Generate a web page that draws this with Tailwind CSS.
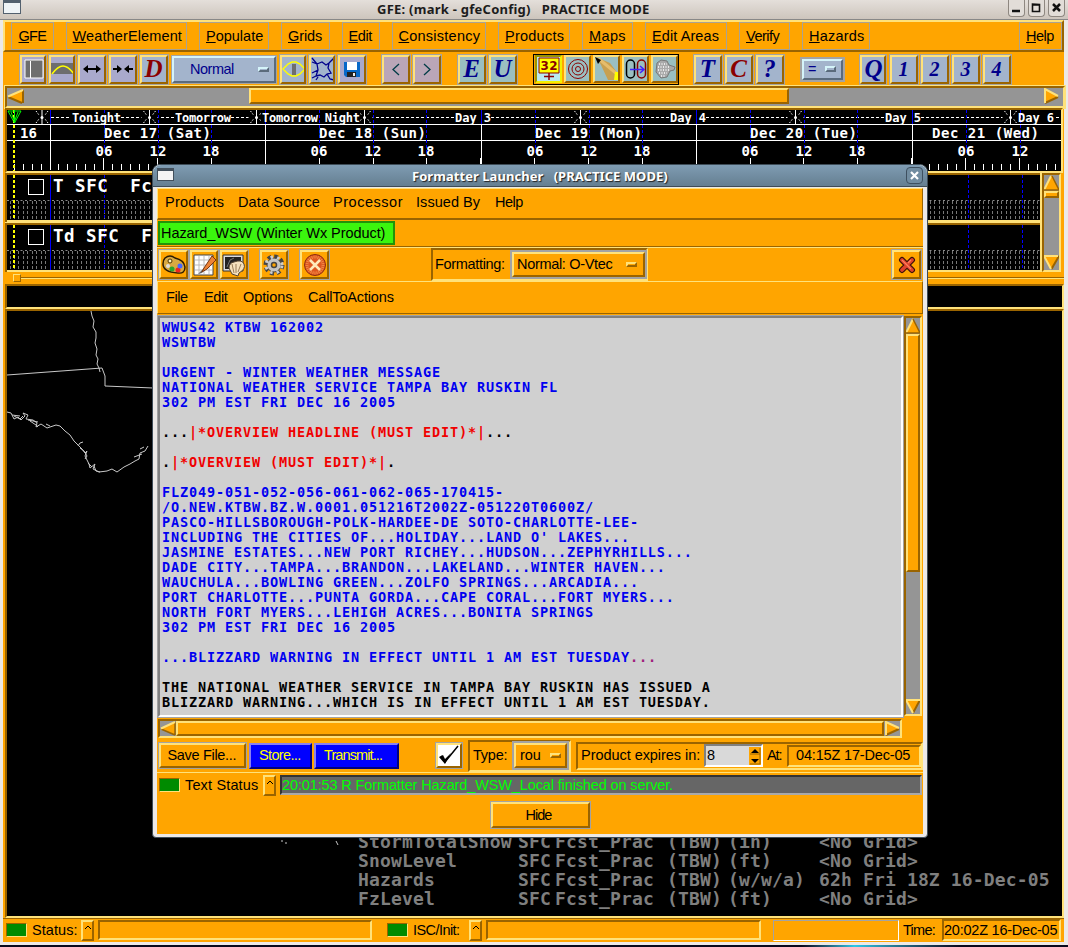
<!DOCTYPE html>
<html lang="en"><head><meta charset="utf-8"><title>GFE</title>
<script src="https://cdn.jsdelivr.net/npm/@tailwindcss/browser@4"></script></head>
<body class="w-[1068px] h-[947px] overflow-hidden bg-[#08081c] font-['Liberation_Sans'] text-[14.5px] leading-none text-black whitespace-nowrap">
<main class="relative flex h-[947px] w-[1068px] flex-col overflow-hidden">
<header class="relative flex h-5 shrink-0 items-center border-b border-[#888] bg-linear-to-b from-[#e4dfda] to-[#cdc5bd]">
  <i class="ml-[3px] h-[14px] w-[18px] -mt-1.5 border border-t-[3px] border-[#52606e] bg-[#eef3f6]"></i>
  <h1 class="ml-[356px] w-[290px] font-['Noto_Sans'] text-[13px] tracking-[0.25px] font-bold text-[#1c1c1c] whitespace-pre">GFE: (mark - gfeConfig)   PRACTICE MODE</h1>
  <div class="ml-auto mr-[3px] -mt-[3px] flex gap-[3px] *:flex *:h-[17px] *:w-[17px] *:items-center *:justify-center *:rounded-b *:border *:border-t-0 *:border-[#8e8780] *:bg-[#e2ddd8]">
    <b><svg width="11" height="11"><path d="M1 9h8" stroke="#111" stroke-width="2.5"/></svg></b>
    <b><svg width="11" height="11"><path d="M1.5 2v7.5h7V2.500z M1 3h8" fill="none" stroke="#111" stroke-width="1.6"/></svg></b>
    <b><svg width="11" height="11"><path d="M2 2l7 7M9 2l-7 7" stroke="#111" stroke-width="2.5"/></svg></b>
  </div>
</header>
<div class="flex h-[922px] shrink-0 flex-col border-l-[3px] border-r-4 border-[#ece9e6] bg-[#ffa500]">
 <nav class="flex h-8 w-[1061px] shrink-0 gap-3 border-2 border-t-[#ffe27a] border-l-[#ffe27a] border-r-[#9a6400] border-b-[#9a6400] pl-[6px] *:flex *:h-7 *:items-center *:justify-center *:border *:border-[#a9a294]">
  <a class="w-[43px]"><span data-w="28"><u>G</u>FE</span></a><a class="w-[121px]"><span data-w="108"><u>W</u>eatherElement</span></a><a class="w-[70px]"><span data-w="56"><u>P</u>opulate</span></a><a class="w-[49px]"><span data-w="35"><u>G</u>rids</span></a><a class="w-[38px]"><span data-w="25"><u>E</u>dit</span></a><a class="w-[94px]"><span data-w="81"><u>C</u>onsistency</span></a><a class="w-[72px]"><span data-w="58"><u>P</u>roducts</span></a><a class="w-[51px]"><span data-w="37"><u>M</u>aps</span></a><a class="w-[82px]"><span data-w="68"><u>E</u>dit Areas</span></a><a class="w-[51px]"><span data-w="37"><u>V</u>erify</span></a><a class="w-[68px]"><span data-w="54"><u>H</u>azards</span></a><a class="ml-auto w-[43px]"><span data-w="29"><u>H</u>elp</span></a>
 </nav>
 <section id="tools" class="flex h-[34px] shrink-0 items-center pl-[17px]"></section>
 <div class="flex h-[22px] w-[1060px] shrink-0 border-2 border-t-[#9a6400] border-l-[#9a6400] border-r-[#ffe27a] border-b-[#ffe27a] bg-[#959595] ml-[2px] outline outline-[#ffe27a]">
  <svg width="17" height="17"><path d="M1 8.500L16 2v13z" fill="#ffa500"/><path d="M16 15V2" stroke="#9a6400" stroke-width="2"/><path d="M1 9L15 15" stroke="#9a6400" stroke-width="2"/><path d="M1 8.500L16 2" stroke="#ffe27a" stroke-width="2"/></svg>
  <i class="ml-[225px] h-[16px] w-[540px] border-2 border-t-[#ffe27a] border-l-[#ffe27a] border-r-[#9a6400] border-b-[#9a6400] bg-[#ffa500]"></i>
  <svg class="ml-auto mr-[3px]" width="17" height="17"><path d="M2 1L15 8.500L2 15z" fill="#ffa500"/><path d="M2 15L15 9" stroke="#9a6400" stroke-width="2"/><path d="M2 15V1L15 8" fill="none" stroke="#ffe27a" stroke-width="2"/></svg>
 </div>
 <div class="flex h-[65px] w-[1058px] shrink-0 ml-[2px] border-2 border-t-[#9a6400] border-l-[#9a6400] border-r-[#ffe27a] border-b-[#ffe27a] bg-black">
  <svg id="tl" width="1054" height="61" viewBox="7 110 1054 61" class="block" font-family="DejaVu Sans Mono" font-weight="bold" fill="#fff"></svg>
 </div>
 <div class="flex h-[99px] shrink-0 pl-[2px]">
  <svg id="rows" width="1037" height="99" viewBox="5 173 1037 99" class="block" font-family="DejaVu Sans Mono" font-weight="bold" fill="#fff"></svg>
  <div class="flex w-[19px] flex-col border-2 border-t-[#9a6400] border-l-[#9a6400] border-r-[#ffe27a] border-b-[#ffe27a] bg-[#959595]">
   <svg width="15" height="16"><path d="M7.500 0L15 15H0z" fill="#ffa500"/><path d="M0 15L7 1" stroke="#ffe27a" stroke-width="2"/><path d="M0 15H15L8 1" fill="none" stroke="#9a6400" stroke-width="1.5"/></svg>
   <i class="h-[7px] border-2 border-t-[#ffe27a] border-l-[#ffe27a] border-r-[#9a6400] border-b-[#9a6400] bg-[#ffa500]"></i>
   <svg class="mt-auto" width="15" height="15"><path d="M0 1H15L7.500 14z" fill="#ffa500"/><path d="M7.500 14L15 1" stroke="#9a6400" stroke-width="2"/><path d="M14 1H0L7 14" fill="none" stroke="#ffe27a" stroke-width="2"/></svg>
  </div>
 </div>
 <div class="flex h-[12px] shrink-0 items-center pl-[10px]"><i class="h-2 w-2 border border-t-[#ffe27a] border-l-[#ffe27a] border-r-[#9a6400] border-b-[#9a6400]"></i><i class="h-[2px] grow border-t border-b border-t-[#9a6400] border-b-[#ffe27a]"></i></div>
 <div class="ml-[2px] h-[25px] w-[1059px] shrink-0 border-2 border-t-[#9a6400] border-l-[#9a6400] border-r-[#ffe27a] border-b-[#ffe27a] bg-black"></div>
 <div class="relative ml-[2px] flex h-[609px] w-[1059px] shrink-0 flex-col justify-end border-2 border-t-[#9a6400] border-l-[#9a6400] border-r-[#ffe27a] border-b-[#ffe27a] bg-black pb-[8px] pl-[351px]">
  <svg class="absolute left-0 top-0" width="340" height="540" viewBox="7 311 340 540" fill="none" stroke="#c8c8c8"><path d="M91 311l1 5 2 5-1 6 3 5v6l-1 5 2 6-1 6 2 4-1 5 2 4 1 4M7 375L102 368l3 8v10l48 2"/><path d="M7 412l4 1 3 6 4-2 3 3 4-4-2-3 5 2-2 4 7 1 4 3-1 4 5-3 6 4 9-3 4 1 5 5 5 4 4 6 8 8 3 4 2-2-2 5 4 8 1 4 5-4-2 5 6 3 8-1 5-2 5 3 7-5 6-3 5-3 4-2 1-6 5-2 3-5M12 415l8 1M28 420l10 2M78 446l2-3 3-1M88 463l4 4M281 841h2M285 843h2M336 841l2 4"/><path d="M14 416l6 3 3-3M30 421l6 4 2 2M46 424l4 2M80 448l4 3 3 5-2 3M94 466l2 5 4 1M134 457l8-3M140 449l4-2"/></svg>
  <div class="grid grid-cols-[160px_37px_112px_61px_91px_auto] font-['DejaVu_Sans_Mono'] text-[18px] font-bold leading-[19px] tracking-[0.15px] text-[#7f7f7f]">
   <b>StormTotalSnow</b><b>SFC</b><b>Fcst_Prac</b><b>(TBW)</b><b>(in)</b><b>&lt;No Grid&gt;</b>
   <b>SnowLevel</b><b>SFC</b><b>Fcst_Prac</b><b>(TBW)</b><b>(ft)</b><b>&lt;No Grid&gt;</b>
   <b>Hazards</b><b>SFC</b><b>Fcst_Prac</b><b>(TBW)</b><b>(w/w/a)</b><b>62h Fri 18Z 16-Dec-05</b>
   <b>FzLevel</b><b>SFC</b><b>Fcst_Prac</b><b>(TBW)</b><b>(ft)</b><b>&lt;No Grid&gt;</b>
  </div>
 </div>
 <footer class="flex h-[23px] shrink-0 items-center border-t border-[#9a6400] pl-[3px]">
  <i class="h-[14px] w-[21px] shrink-0 border border-[#9a6400] border-r-[#ffe27a] border-b-[#ffe27a] bg-[#008b00]"></i>
  <span class="ml-[5px] inline-block shrink-0" data-w="44">Status:</span>
  <i class="ml-[5px] flex h-[21px] w-[13px] shrink-0 justify-center border-2 border-t-[#ffe27a] border-l-[#ffe27a] border-r-[#9a6400] border-b-[#9a6400] pt-[3px]"><svg width="8" height="5"><path d="M1 4l3-3 3 3" fill="none" stroke="#000"/></svg></i>
  <i class="ml-[4px] h-[20px] w-[274px] shrink-0 border-2 border-t-[#9a6400] border-l-[#9a6400] border-r-[#ffe27a] border-b-[#ffe27a]"></i>
  <i class="ml-[15px] h-[14px] w-[21px] shrink-0 border border-[#9a6400] border-r-[#ffe27a] border-b-[#ffe27a] bg-[#008b00]"></i>
  <span class="ml-[5px] inline-block shrink-0" data-w="51">ISC/Init:</span>
  <i class="ml-[5px] flex h-[21px] w-[13px] shrink-0 justify-center border-2 border-t-[#ffe27a] border-l-[#ffe27a] border-r-[#9a6400] border-b-[#9a6400] pt-[3px]"><svg width="8" height="5"><path d="M1 4l3-3 3 3" fill="none" stroke="#000"/></svg></i>
  <i class="ml-[4px] h-[20px] w-[275px] shrink-0 border-2 border-t-[#9a6400] border-l-[#9a6400] border-r-[#ffe27a] border-b-[#ffe27a]"></i>
  <i class="ml-[12px] h-[21px] w-[126px] shrink-0 border border-[#a3a3a3] border-r-white border-b-white"></i>
  <span class="ml-[4px] inline-block shrink-0" data-w="34">Time:</span>
  <span class="ml-[5px] flex h-[22px] w-[119px] shrink-0 items-center border-2 border-t-[#9a6400] border-l-[#9a6400] border-r-[#ffe27a] border-b-[#ffe27a]"><span class="inline-block" data-w="115">20:02Z 16-Dec-05</span></span>
 </footer>
</div>
<div class="h-[3px] shrink-0 bg-[#ece9e6]"></div><div class="h-[2px] shrink-0 bg-linear-to-r from-[#08081c] from-75% via-[#2cc8e8] via-80% to-[#08081c] to-90%"></div>

<section class="absolute left-[152px] top-[164px] flex h-[674px] w-[776px] flex-col rounded-t-lg rounded-b border border-[#3e4c57] bg-[#ece9e6]">
 <div class="flex h-[22px] shrink-0 items-center rounded-t-lg border-b border-[#3e4c57] bg-linear-to-b from-[#7f9cb3] to-[#657f91]">
  <i class="ml-[4px] h-[13px] w-[17px] -mt-0.5 border border-t-[3px] border-[#43505c] bg-[#f4f4f4]"></i>
  <h2 class="ml-[238px] w-[280px] pt-0.5 font-['Noto_Sans'] text-[13px] tracking-[0.05px] font-bold text-white whitespace-pre text-shadow-[1px_1px_1px_#222]">Formatter Launcher   (PRACTICE MODE)</h2>
  <b class="ml-auto mr-[4px] flex h-[17px] w-[17px] items-center justify-center rounded border border-[#3e5060] bg-[#718ca0]"><svg width="9" height="9"><path d="M1 1l7 7M8 1l-7 7" stroke="#fff" stroke-width="2.2"/></svg></b>
 </div>
 <div class="mt-px mx-[4px] flex h-[646px] w-[766px] shrink-0 flex-col bg-[#ffa500]">
  <nav class="flex h-8 shrink-0 items-center border border-t-[#ffe27a] border-l-[#ffe27a] border-r-[#9a6400] border-b-2 border-b-[#9a6400] pl-[7px] pb-[2px]"><span class="w-[73px]"><span class="inline-block" data-w="58">Products</span></span><span class="w-[95px]"><span class="inline-block" data-w="80">Data Source</span></span><span class="w-[83px]"><span class="inline-block" data-w="67">Processor</span></span><span class="w-[79px]"><span class="inline-block" data-w="64">Issued By</span></span><span data-w="29">Help</span></nav>
  <div class="flex h-[27px] shrink-0 items-start border-b border-[#9a6400]"><span class="ml-px mt-[1px] flex h-[24px] w-[237px] items-center border-2 border-[#249109] bg-[#3bf50e] pl-px"><span class="inline-block" data-w="230">Hazard_WSW (Winter Wx Product)</span></span></div>
  <div class="flex h-[34px] shrink-0 items-center border-t border-[#ffe27a]">
   <div class="flex *:flex *:h-[29px] *:items-center *:justify-center *:border-2 *:border-t-[#ffe27a] *:border-l-[#ffe27a] *:border-r-[#9a6400] *:border-b-[#9a6400] *:outline *:outline-[#a3a3a3]">
    <i class="ml-[2px] w-[29px]"><svg width="24" height="20"><path d="M3 3q5-4 10 0q9 2 10 9q0 7-7 6Q1 17 1 9q0-4 2-6z" fill="#d9a941" stroke="#2b1b00" stroke-width="1.500"/><circle cx="8" cy="6" r="2" fill="#fff4bd" stroke="#4c3000"/><circle cx="6" cy="11" r="2" fill="#dedede"/><circle cx="10" cy="14" r="2.500" fill="#2ca42c"/><circle cx="16" cy="15" r="2.500" fill="#e22"/><circle cx="18" cy="11" r="2.500" fill="#46f"/></svg></i>
    <i class="ml-[2px] w-[28px]"><svg width="24" height="24"><path d="M2 2h19v20H2z" fill="#fff" stroke="#444"/><path d="M3 7h17M3 12h17M3 17h17M7 3v18M12 3v18M17 3v18" stroke="#bbb"/><path d="M10 20l-4 1 7-7" fill="#666"/><path d="M12 15L20 3l4 4-9 9-5 3z" fill="#ed8337" stroke="#773510"/></svg></i>
    <i class="ml-[2px] w-[28px]"><svg width="24" height="24"><path d="M2 3h18v14H2z" fill="#222" stroke="#ddd" stroke-width="2"/><path d="M1 2h20v16H1z" fill="none" stroke="#333"/><path d="M5 14l3-7 4-2" stroke="#777" fill="none"/><path d="M10 21l-3-6q0-5 5-6q8-3 10 2q2 5-5 9l-1 3z" fill="#f5e1bd" stroke="#554532"/><path d="M12 20L10 11M14 20v-9M16 19l3-8" stroke="#987d58"/></svg></i>
    <i class="ml-[12px] w-[28px]"><svg width="22" height="22" viewBox="-11 -11 22 22"><circle r="8.500" fill="none" stroke="#444" stroke-width="4" stroke-dasharray="3.800 2.870"/><circle r="7" fill="#c4c4c4" stroke="#444"/><circle r="8" fill="none" stroke="#ccc" stroke-width="3" stroke-dasharray="2.500 4.170" stroke-dashoffset="-.6"/><circle r="2.500" fill="#ffa500" stroke="#444" stroke-width="1.500"/></svg></i>
    <i class="ml-[12px] w-[29px]"><svg width="24" height="24"><circle cx="12" cy="12" r="10.500" fill="#dd5520" stroke="#8b2c12"/><circle cx="12" cy="12" r="8" fill="none" stroke="#f18b45" stroke-dasharray="1 1" stroke-width="3"/><path d="M7 7l10 10M17 7L7 17" stroke="#ffe9bb" stroke-width="2.500"/></svg></i>
   </div>
   <div class="ml-[102px] flex h-[33px] w-[217px] items-center border-2 border-t-[#9a6400] border-l-[#9a6400] border-r-[#ffe27a] border-b-[#ffe27a] pl-[2px]"><span class="inline-block" data-w="72">Formatting:</span><span class="ml-[5px] flex h-[25px] w-[133px] items-center justify-between border-2 border-t-[#ffe27a] border-l-[#ffe27a] border-r-[#9a6400] border-b-[#9a6400] pl-[3px] pr-[6px] outline-2 outline-[#a3a3a3]"><span class="inline-block" data-w="100">Normal: O-Vtec</span><i class="h-[5px] w-[11px] border-2 border-t-[#ffe27a] border-l-[#ffe27a] border-r-[#9a6400] border-b-[#9a6400]"></i></span></div>
   <i class="ml-auto mr-[2px] flex h-[29px] w-[29px] items-center justify-center border-2 border-t-[#ffe27a] border-l-[#ffe27a] border-r-[#9a6400] border-b-[#9a6400] outline outline-[#a3a3a3]"><svg width="18" height="18"><path d="M4 4l10 10M14 4L4 14" stroke="#370f0a" stroke-width="6" stroke-linecap="round"/><path d="M4 4l10 10M14 4L4 14" stroke="#dd422c" stroke-width="3.800" stroke-linecap="round"/><path d="M4 4l9 9M13 4l-3 3" stroke="#ff805c" stroke-width="1.300"/></svg></i>
  </div>
  <nav class="flex h-[33px] shrink-0 items-center border border-t-[#ffe27a] border-l-[#ffe27a] border-r-[#9a6400] border-b-[#9a6400] pl-[8px] pb-px"><span class="w-[38px]"><span class="inline-block" data-w="23">File</span></span><span class="w-[39px]"><span class="inline-block" data-w="25">Edit</span></span><span class="w-[65px]"><span class="inline-block" data-w="50">Options</span></span><span data-w="91">CallToActions</span></nav>
  <div class="mt-[2px] flex h-[402px] shrink-0">
   <pre class="ml-px h-[401px] w-[745px] border-2 border-t-[#808080] border-l-[#808080] border-r-white border-b-white bg-[#d0d0d0] pl-[2px] pt-[2px] font-['DejaVu_Sans_Mono'] text-[13.500px] leading-[15px] font-bold tracking-[0.87px] text-[#0000f0] outline outline-[#a3a3a3]">WWUS42 KTBW 162002
WSWTBW

URGENT - WINTER WEATHER MESSAGE
NATIONAL WEATHER SERVICE TAMPA BAY RUSKIN FL
302 PM EST FRI DEC 16 2005

<span class="text-black">...</span><span class="text-[#f00000]">|*OVERVIEW HEADLINE (MUST EDIT)*|</span><span class="text-black">...</span>

<span class="text-black">.</span><span class="text-[#f00000]">|*OVERVIEW (MUST EDIT)*|</span><span class="text-black">.</span>

FLZ049-051-052-056-061-062-065-170415-
/O.NEW.KTBW.BZ.W.0001.051216T2002Z-051220T0600Z/
PASCO-HILLSBOROUGH-POLK-HARDEE-DE SOTO-CHARLOTTE-LEE-
INCLUDING THE CITIES OF...HOLIDAY...LAND O' LAKES...
JASMINE ESTATES...NEW PORT RICHEY...HUDSON...ZEPHYRHILLS...
DADE CITY...TAMPA...BRANDON...LAKELAND...WINTER HAVEN...
WAUCHULA...BOWLING GREEN...ZOLFO SPRINGS...ARCADIA...
PORT CHARLOTTE...PUNTA GORDA...CAPE CORAL...FORT MYERS...
NORTH FORT MYERS...LEHIGH ACRES...BONITA SPRINGS
302 PM EST FRI DEC 16 2005

...BLIZZARD WARNING IN EFFECT UNTIL 1 AM EST TUESDAY<span class="text-[#a0207c]">...</span>

<span class="text-black">THE NATIONAL WEATHER SERVICE IN TAMPA BAY RUSKIN HAS ISSUED A
BLIZZARD WARNING...WHICH IS IN EFFECT UNTIL 1 AM EST TUESDAY.</span></pre>
   <div class="ml-px flex h-[400px] w-[18px] flex-col border-2 border-t-[#9a6400] border-l-[#9a6400] border-r-[#ffe27a] border-b-[#ffe27a] bg-[#959595]">
    <svg width="14" height="16"><path d="M7 0L14 15H0z" fill="#ffa500"/><path d="M0 15L7 1" stroke="#ffe27a" stroke-width="2"/><path d="M0 15H14L7 1" fill="none" stroke="#9a6400" stroke-width="1.500"/></svg>
    <i class="h-[238px] border-2 border-t-[#ffe27a] border-l-[#ffe27a] border-r-[#9a6400] border-b-[#9a6400] bg-[#ffa500]"></i>
    <svg class="mt-auto" width="14" height="15"><path d="M0 1H14L7 14z" fill="#ffa500"/><path d="M7 14L14 1" stroke="#9a6400" stroke-width="2"/><path d="M14 1H0L7 14" fill="none" stroke="#ffe27a" stroke-width="2"/></svg>
   </div>
  </div>
  <div class="ml-px mt-[1px] flex h-[19px] w-[744px] shrink-0 border-2 border-t-[#9a6400] border-l-[#9a6400] border-r-[#ffe27a] border-b-[#ffe27a] bg-[#959595]">
   <svg width="16" height="15"><path d="M1 7.500L15 1v13z" fill="#ffa500"/><path d="M15 14V1M1 8L15 14" stroke="#9a6400" stroke-width="1.500"/><path d="M1 7.500L15 1" stroke="#ffe27a" stroke-width="2"/></svg>
   <i class="grow border-2 border-t-[#ffe27a] border-l-[#ffe27a] border-r-[#9a6400] border-b-[#9a6400] bg-[#ffa500]"></i>
   <svg width="16" height="15"><path d="M2 1L15 7.500L2 14z" fill="#ffa500"/><path d="M2 14L15 8" stroke="#9a6400" stroke-width="2"/><path d="M2 14V1L15 7" fill="none" stroke="#ffe27a" stroke-width="2"/></svg>
  </div>
  <div class="flex h-[35px] shrink-0 items-center border-b border-[#ffe27a] pt-px">
   <b class="ml-[2px] flex h-[25px] w-[87px] items-center justify-center border-2 border-t-[#ffe27a] border-l-[#ffe27a] border-r-[#9a6400] border-b-[#9a6400] font-normal outline outline-[#a3a3a3]"><span class="inline-block" data-w="70">Save File...</span></b>
   <b class="ml-[3px] flex h-[26px] w-[63px] items-center justify-center border-2 border-t-[#8a80f0] border-l-[#8a80f0] border-r-[#000080] border-b-[#000080] bg-[#0000ff] font-normal text-[#ffff00]"><span class="inline-block" data-w="43">Store...</span></b>
   <b class="ml-[2px] flex h-[26px] w-[85px] items-center justify-center border-2 border-t-[#8a80f0] border-l-[#8a80f0] border-r-[#000080] border-b-[#000080] bg-[#0000ff] font-normal text-[#ffff00]"><span class="inline-block" data-w="65">Transmit...</span></b>
   <b class="ml-[37px] h-[25px] w-[26px] border-2 border-t-[#ffe27a] border-l-[#ffe27a] border-r-[#9a6400] border-b-[#9a6400] bg-white outline outline-[#a3a3a3]"><svg width="22" height="21"><path d="M3 11l4 6L20 1" fill="none" stroke="#000" stroke-width="1.500"/><path d="M1 12l4-2 2 4 6-6-6 11z"/></svg></b>
   <div class="ml-[6px] flex h-[32px] w-[103px] items-center border-2 border-t-[#9a6400] border-l-[#9a6400] border-r-[#ffe27a] border-b-[#ffe27a] pl-[3px]"><span class="inline-block" data-w="35">Type:</span><span class="ml-[6px] flex h-[25px] w-[53px] items-center justify-between border-2 border-t-[#ffe27a] border-l-[#ffe27a] border-r-[#9a6400] border-b-[#9a6400] px-1 outline-2 outline-[#a3a3a3]"><span class="inline-block" data-w="21">rou</span><i class="h-[5px] w-[11px] border-2 border-t-[#ffe27a] border-l-[#ffe27a] border-r-[#9a6400] border-b-[#9a6400]"></i></span></div>
   <div class="ml-[5px] flex h-[28px] w-[347px] items-center border-2 border-t-[#9a6400] border-l-[#9a6400] border-r-[#ffe27a] border-b-[#ffe27a] pl-[3px]"><span class="inline-block shrink-0" data-w="120">Product expires in:</span><span class="ml-[3px] flex h-[23px] w-[59px] shrink-0 items-center border-2 border-t-[#808080] border-l-[#808080] border-r-white border-b-white bg-[#d9d9d9] pl-px">8<svg class="ml-auto bg-[#ffa500]" width="12" height="18"><path d="M6 2l4 4H2zM2 12h8l-4 4z"/><path d="M1 7h10M1 17h10M11 1v16" stroke="#9a6400"/></svg></span><span class="ml-[4px] inline-block shrink-0" data-w="17">At:</span><span class="ml-[3px] flex h-[22px] w-[134px] shrink-0 items-center justify-center border-2 border-t-[#9a6400] border-l-[#9a6400] border-r-[#ffe27a] border-b-[#ffe27a]"><span class="inline-block" data-w="116">04:15Z 17-Dec-05</span></span></div>
  </div>
  <div class="flex h-[24px] shrink-0 items-center">
   <i class="ml-[2px] h-[14px] w-[21px] shrink-0 border border-[#9a6400] border-r-[#ffe27a] border-b-[#ffe27a] bg-[#008b00]"></i><span class="ml-[5px] inline-block shrink-0" data-w="73">Text Status</span>
   <i class="ml-[5px] flex h-[21px] w-[13px] shrink-0 justify-center border-2 border-t-[#ffe27a] border-l-[#ffe27a] border-r-[#9a6400] border-b-[#9a6400] pt-[3px]"><svg width="8" height="5"><path d="M1 4l3-3 3 3" fill="none" stroke="#000"/></svg></i>
   <span class="ml-[4px] flex h-[20px] w-[642px] shrink-0 items-center border-2 border-t-[#333] border-l-[#333] border-r-[#a9a9a9] border-b-[#a9a9a9] bg-[#666] text-[#00ff00]"><span class="inline-block" data-w="395">20:01:53 R Formatter Hazard_WSW_Local finished on server.</span></span>
  </div>
  <b class="mt-[5px] flex h-[26px] w-[99px] items-center justify-center self-center border-2 border-t-[#ffe27a] border-l-[#ffe27a] border-r-[#9a6400] border-b-[#9a6400] font-normal outline outline-[#a3a3a3]"><span class="inline-block" data-w="29">Hide</span></b>
 </div>
</section>
</main>
<script>
// Toolbar buttons: [left margin, outer width, fill, content]
const btn = 'flex h-[29px] shrink-0 items-center justify-center overflow-hidden border-2 border-t-[#ffe27a] border-l-[#ffe27a] border-r-[#9a6400] border-b-[#9a6400] outline outline-[#a3a3a3]';
const glyph = (t, c, s) => `<svg width="24" height="25"><text x="11.500" y="${s > 23 ? 20 : 19}" text-anchor="middle" font-family="Liberation Serif" font-style="italic" font-weight="bold" font-size="${s}" fill="${c}">${t}</text></svg>`;
const sv = s => `<svg width="24" height="24" fill="none">${s}</svg>`;
const N = '#00008b', R = '#8b0000';
const A = [
 [0,26,'#a9a9cc',sv('<path d="M3 3h18v18H3z" fill="#6e6e6e" stroke="#fff"/><path d="M8.500 4v17" stroke="#fff"/>')],
 [3,26,'#a9a9cc',sv('<path d="M0 6h24v11H0z" fill="#6e6e6e"/><path d="M1 17q6-8 11-8t11 8" stroke="#ffff00" stroke-width="1.500"/>')],
 [3,28,'#a9a9cc',sv('<path d="M5 12h14" stroke="#000" stroke-width="2"/><path d="M3 12l5-4v8zM21 12l-5-4v8z" fill="#000"/>')],
 [3,28,'#a9a9cc',sv('<path d="M2 12h5M17 12h5" stroke="#000" stroke-width="2"/><path d="M11 12l-5-4v8zM13 12l5-4v8z" fill="#000"/>')],
 [3,28,'#a3b4cc',glyph('D',R,25)],
 'normal',
 [4,26,'#a3b4cc',sv('<path d="M1 12l5-5 4-2h4l4 2 5 5-5 5-4 2h-4l-4-2z" stroke="#ffff00" stroke-width="1.500"/><path d="M10 7h4v11h-4z" fill="#6e6e6e"/>')],
 [3,26,'#a3b4cc',sv('<path d="M1 1l5 6M6 7l5-2 4 3 3-2 5-5M18 6l-1 5 3 5-4 1-3 3-4-2-4 1 2-6-1-6M5 19l-4 2M7 20l-2 3M16 17l3 5 4 1M1 5l5 2M7 13l-6 3" stroke="#00008b" stroke-width="1.300"/>')],
 [3,28,'#a9a9cc',sv('<path d="M4 5h16v15H6l-2-2z" fill="#0768c8"/><path d="M7 5h10v8H7z" fill="#fff"/><path d="M7 15h9v5H7z" fill="#222"/><path d="M13 16h2v3h-2z" fill="#eee"/>')],
 [16,28,'#baa6b8',sv('<path d="M15 7L9 12.500L15 18" stroke="#003c46" stroke-width="1.300"/>')],
 [3,28,'#baa6b8',sv('<path d="M9 7L15 12.500L9 18" stroke="#003c46" stroke-width="1.300"/>')],
 [17,28,'#9abfc1',glyph('E',N,25)],
 [3,28,'#9abfc1',glyph('U',N,25)],
 'group',
 [15,28,'#a3b4cc',glyph('T',N,25)],
 [3,28,'#a3b4cc',glyph('C',R,25)],
 [3,28,'#a3b4cc',glyph('?',N,25)],
 'eq',
 [17,26,'#a3b4cc',glyph('Q',N,25)],
 [4,28,'#a3b4cc',glyph('1',N,20)],[3,28,'#a3b4cc',glyph('2',N,20)],[3,28,'#a3b4cc',glyph('3',N,20)],[3,28,'#a3b4cc',glyph('4',N,20)]];
const G = [
 sv('<rect width="24" height="24" fill="#baeaf0"/><path d="M2 1h20v15H2z" fill="#ffff00" stroke="#8b0000"/><text x="3.500" y="13" font-family="DejaVu Sans" font-weight="bold" font-style="normal" font-size="12" textLength="17" fill="#8b0000">32</text><path d="M12 16v7M7 19.500h10" stroke="#8b0000" stroke-width="1.500"/>'),
 sv('<g stroke="#8b0000"><circle cx="12" cy="12" r="9.500"/><circle cx="12" cy="12" r="6"/><circle cx="12" cy="12" r="2.500"/></g>'),
 sv('<path d="M1 0l14 6 9 12-3 5H13L6 8z" fill="#c8a050"/><path d="M4 2l18 15" stroke="#e5bd6c" stroke-width="3"/><path d="M0 0l6 3-3 4z" fill="#000"/><path d="M20 15h4v8h-5z" fill="#ffff00"/>'),
 sv('<rect x="2.500" y="3" width="8" height="18" rx="4" stroke="#000" stroke-width="1.500"/><rect x="13.500" y="3" width="8" height="18" rx="4" stroke="#8b0000" stroke-width="1.500"/><path d="M6 12.500h14M16 9l4 3.500-4 3.500" stroke="#4020ff" stroke-width="1.500"/>'),
 sv('<path d="M4 6l4-3 6 1 2 4 6 2-1 3-4 1-3 6-6 1-5-6z" fill="#aaa" stroke="#777"/><path d="M6 7h8M5 10h12M5 13h11M6 16h8M8 19h4" stroke="#fff" stroke-width="1.500" stroke-dasharray="1 1.500"/>')];
const cells = { normal:`<span class="ml-[4px] flex h-[27px] w-[104px] shrink-0 items-center justify-between border-2 border-t-[#d5f4fa] border-l-[#d5f4fa] border-r-[#5b6b7c] border-b-[#5b6b7c] bg-[#a3b4cc] pl-[16px] pr-[5px] text-[#00008b] outline outline-[#a3a3a3]"><span class="inline-block" data-w="46">Normal</span><i class="h-[5px] w-[11px] border-2 border-t-[#d5f4fa] border-l-[#d5f4fa] border-r-[#5b6b7c] border-b-[#5b6b7c]"></i></span>`,
 eq:`<span class="ml-[18px] flex h-[21px] w-[41px] shrink-0 items-center justify-between border-2 border-t-[#d5f4fa] border-l-[#d5f4fa] border-r-[#5b6b7c] border-b-[#5b6b7c] bg-[#a3b4cc] pl-[4px] pr-[5px] text-[#00008b] outline-2 outline-[#a3a3a3]">=<i class="h-[6px] w-[11px] border-2 border-t-[#d5f4fa] border-l-[#d5f4fa] border-r-[#5b6b7c] border-b-[#5b6b7c]"></i></span>`,
 group:`<span class="ml-[16px] flex h-[31px] w-[146px] shrink-0 items-center gap-[2px] border border-black pl-px">${G.map((g,i)=>`<i class="${i?'flex h-[28px] w-[27px] shrink-0 items-center justify-center overflow-hidden border-2 border-t-[#ffe27a] border-l-[#ffe27a] border-r-[#9a6400] border-b-[#9a6400] bg-[#9abfc1]':'flex h-[28px] w-[27px] shrink-0 items-center justify-center overflow-hidden border-2 border-t-[#9a9400] border-l-[#9a9400] border-r-[#f0f000] border-b-[#f0f000] bg-[#baeaf0]'}">${g}</i>`).join('')}</span>`};
document.getElementById('tools').innerHTML = A.map(a => typeof a === 'string' ? cells[a] : `<i class="${btn}" style="margin-left:${a[0]}px;width:${a[1]}px;background:${a[2]}">${a[3]}</i>`).join('');

// Time axis: 24 hours span 215.4 px
const mid = [50.5,265.5,481.5,696.500,912.5], H = 8.975;
let s = '', g = '';
const tx = (x,y,t,w,fs) => `<text x="${x}" y="${y}" font-size="${fs}" textLength="${w}" xml:space="preserve">${t}</text>`;
const ln = (x1,y1,x2,y2,c,d='') => `<path d="M${x1} ${y1}L${x2} ${y2}" stroke="${c}" ${d?`stroke-dasharray="${d}"`:''}/>`;
const spans = [[72,49,'Tonight'],[175,56,'Tomorrow'],[262,98,'Tomorrow Night'],[455,36,'Day 3'],[670,36,'Day 4'],[885,36,'Day 5'],[1018,36,'Day 6']];
for (let i=-4;i<114;i++){ const x=Math.round(50.5+i*H)-.5; const k=((i%24)+24)%24; if(x>7&&x<1061) s+=ln(x,k%6?164:158,x,170,'#fff'); }
s += ln(46,117.5,1061,117.500,'#fff','3 2')+ln(7,124.5,1061,124.5,'#fff')+ln(7,140.5,1061,140.5,'#fff');
[42,149.500,256.500,364.500,580.5,795.500,1010.500].forEach(x=>{ s+=`<rect x="${x-8}" y="111" width="16" height="13" fill="#000"/>`+ln(x,110,x,124,'#fff')+`<path d="M${x-6} 111l3 4M${x-6} 123l3-4M${x+6} 111l-3 4M${x+6} 123l-3-4" stroke="#fff" stroke-dasharray="1.500 1.500"/><circle cx="${x}" cy="117.500" r="1.500"/>`; });
spans.forEach(([x,w])=> s+=`<rect x="${x-1}" y="111" width="${w+1}" height="13" fill="#000"/>`);
mid.forEach(m=>{ s+=ln(m,125,m,170,'#fff')+ln(m,110,m,124,'#00f'); [54,108,161].forEach(o=>{ if(m+o<1061) s+=ln(m+o,110,m+o,153,'#00f','3 2'); }); });
spans.forEach(([x,w,t])=> s+=tx(x,122,t,w,12));
[['16',20,17],['Dec 17 (Sat)',104,107],['Dec 18 (Sun)',319,107],['Dec 19 (Mon)',535,107],['Dec 20 (Tue)',750,107],['Dec 21 (Wed)',932,107]].forEach(([t,x,w])=> s+=tx(x,138,t,w,14));
mid.forEach(m=>[['06',54],['12',108],['18',161]].forEach(([t,o])=>{ if(m+o<1050) s+=tx(m+o-9,156,t,17,14); }));
s += `<path d="M14 110v61" stroke="#ff0" stroke-width="2" stroke-dasharray="3 2"/><path d="M8 111h13l-6.500 12zM14.500 110v13M11 112l3 8M18 112l-3 8" fill="none" stroke="#0f0"/>`;
document.getElementById('tl').innerHTML = s;
[[173,'T SFC  Fcst'],[223,'Td SFC  Fcst']].forEach(([y,t])=>{
 g += `<rect x="5" y="${y}" width="1037" height="50" fill="#ffe27a"/><path d="M5 ${y}h1035v2H7v47H5z" fill="#9a6400"/><rect x="7" y="${y+2}" width="1033" height="45" fill="#000"/>`;
 g += ln(7,y+27.5,1040,y+27.500,'#888','2 2.500');
 for(let x=10.500;x<1040;x+=4.488) g+=ln(Math.round(x)-.5,y+28,Math.round(x)-.5,y+47,'#777','3 2');
 g += `<path d="M50.500 ${y+2}v45" stroke="#00f"/>`;
 [104.5,968.5,1022.5].forEach(x=> g+=ln(x,y+2,x,y+47,'#00f','3 2'));
 g += `<path d="M14 ${y+2}v45" stroke="#ff0" stroke-width="2" stroke-dasharray="3 2"/><rect x="28.500" y="${y+6.500}" width="15" height="15" fill="none" stroke="#fff"/>`+tx(53,y+19,t,t.length*11,17.500); });
document.getElementById('rows').innerHTML = g;

// Spread each label's letters over its set width
document.querySelectorAll('[data-w]').forEach(e => {
  const n = e.textContent.length, r = document.createRange(); let sp = 0;
  r.selectNodeContents(e);
  for (let i = 0; i < 4; i++) { sp += (e.dataset.w - r.getBoundingClientRect().width) / n; e.style.letterSpacing = sp + 'px'; }
  e.style.width = e.dataset.w + 'px';
});
</script>
</body></html>
